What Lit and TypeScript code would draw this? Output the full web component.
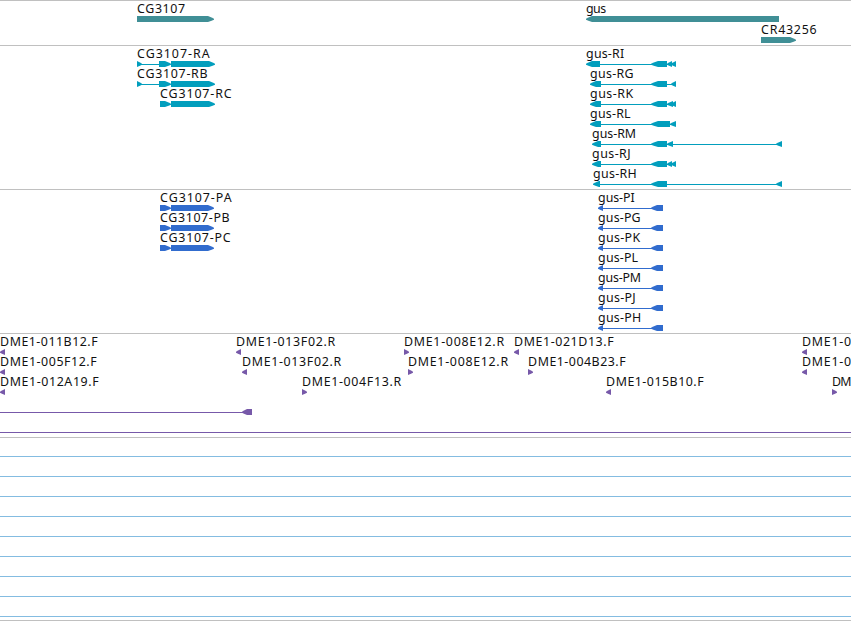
import { LitElement, html, svg, css } from 'lit';
import { customElement, property } from 'lit/decorators.js';

type Dir = 'left' | 'right';

// [start, end, length of the arrow tip]
type Exon = [number, number, number];

interface Feature {
  name?: string;
  x?: number;
  width?: number;
  dir: Dir;
  exons: Exon[];
  line?: [number, number];
}

interface Track {
  id: string;
  color: string;
  laneHeight: number;
  pad: number;
  lanes: Feature[][];
}

const feature = (name: string, x: number, width: number, dir: Dir, exons: Exon[], line?: [number, number]): Feature =>
  ({ name, x, width, dir, exons, line });

const read = (name: string, start: number, width: number, dir: Dir) =>
  feature(name, start + 0.5, width, dir, [[start, start + 5, 5]]);

const protein = (name: string, width: number) =>
  feature(name, 598.5, width, 'left', [[598, 603, 5], [651, 663, 6]], [602, 652]);

const TRACKS: Track[] = [
  {
    id: 'genes',
    color: '#408f96',
    laneHeight: 21,
    pad: 2,
    lanes: [
      [
        feature('CG3107', 137.5, 48, 'right', [[137, 214, 6]]),
        feature('gus', 586.5, 20, 'left', [[586, 779, 6]]),
      ],
      [feature('CR43256', 761.5, 55.5, 'right', [[761, 796, 6]])],
    ],
  },
  {
    id: 'transcripts',
    color: '#029ebd',
    laneHeight: 20,
    pad: 3,
    lanes: [
      [
        feature('CG3107-RA', 137.5, 72.5, 'right', [[137, 142, 5], [159, 171, 6], [171, 215, 6]], [141, 160]),
        feature('gus-RI', 586.5, 38, 'left', [[586, 600, 6], [651, 667, 7], [667, 672, 5], [671, 676, 5]], [599, 676]),
      ],
      [
        feature('CG3107-RB', 137.5, 70.5, 'right', [[137, 142, 5], [159, 171, 6], [171, 215, 6]], [141, 160]),
        feature('gus-RG', 590.5, 43.5, 'left', [[590, 601, 6], [651, 667, 7], [671, 676, 5]], [600, 676]),
      ],
      [
        feature('CG3107-RC', 160.5, 71.5, 'right', [[160, 171, 6], [171, 215, 6]]),
        feature('gus-RK', 590.5, 43, 'left', [[590, 601, 6], [651, 667, 7], [667, 673, 6], [671, 676, 5]], [600, 676]),
      ],
      [feature('gus-RL', 590.5, 40.5, 'left', [[590, 601, 6], [651, 670, 7], [670, 676, 6]], [600, 676])],
      [feature('gus-RM', 592.5, 44, 'left', [[592, 601, 6], [651, 667, 7], [667, 673, 6], [776, 782, 6]], [600, 782])],
      [feature('gus-RJ', 592.5, 38.5, 'left', [[592, 601, 6], [651, 667, 7], [667, 672, 5], [671, 676, 5]], [600, 676])],
      [feature('gus-RH', 593.5, 43.5, 'left', [[593, 600, 6], [651, 667, 7], [776, 782, 6]], [599, 782])],
    ],
  },
  {
    id: 'proteins',
    color: '#316cce',
    laneHeight: 20,
    pad: 3,
    lanes: [
      [feature('CG3107-PA', 160.5, 71.5, 'right', [[160, 171, 6], [171, 214, 6]]), protein('gus-PI', 36.5)],
      [feature('CG3107-PB', 160.5, 69.5, 'right', [[160, 171, 6], [171, 214, 6]]), protein('gus-PG', 42.5)],
      [feature('CG3107-PC', 160.5, 70.5, 'right', [[160, 171, 6], [171, 214, 6]]), protein('gus-PK', 42)],
      [protein('gus-PL', 40)],
      [protein('gus-PM', 43)],
      [protein('gus-PJ', 37.5)],
      [protein('gus-PH', 43)],
    ],
  },
  {
    id: 'reads',
    color: '#7759a9',
    laneHeight: 20,
    pad: 3,
    lanes: [
      [
        read('DME1-011B12.F', 0, 97.5, 'left'),
        read('DME1-013F02.R', 236, 99, 'left'),
        read('DME1-008E12.R', 404, 100, 'right'),
        read('DME1-021D13.F', 514, 99.5, 'left'),
        read('DME1-0', 802, 49, 'left'),
      ],
      [
        read('DME1-005F12.F', 0, 96.5, 'left'),
        read('DME1-013F02.R', 242, 99, 'left'),
        read('DME1-008E12.R', 408, 100, 'right'),
        read('DME1-004B23.F', 528, 97.5, 'right'),
        read('DME1-0', 802, 49, 'left'),
      ],
      [
        read('DME1-012A19.F', 0, 98.5, 'left'),
        read('DME1-004F13.R', 302, 99, 'right'),
        read('DME1-015B10.F', 606, 97.5, 'left'),
        read('DM', 832, 19.5, 'right'),
      ],
      [{ dir: 'left', exons: [[242, 252, 5]], line: [0, 243] }],
      [{ dir: 'left', exons: [], line: [0, 851] }],
    ],
  },
  {
    id: 'clones',
    color: '#84bce1',
    laneHeight: 20,
    pad: 2,
    lanes: Array.from({ length: 9 }, () => [{ dir: 'right' as Dir, exons: [], line: [0, 851] as [number, number] }]),
  },
];

@customElement('genome-track')
class GenomeTrack extends LitElement {
  static styles = css`
    :host {
      display: block;
      border-top: 1px solid #c0c0c0;
    }

    .lanes {
      display: flex;
      flex-direction: column;
    }

    .lane {
      display: block;
      width: 851px;
      overflow: visible;
    }

    .label {
      font-family: 'Noto Sans', 'Open Sans', sans-serif;
      font-size: 12.4px;
      fill: #111;
    }
  `;

  @property({ attribute: false }) track!: Track;

  arrow([start, end, tip]: Exon, dir: Dir) {
    // the tip bulges a little before it closes
    const [tail, head, step] = dir === 'right' ? [start, end, -1] : [end, start, 1];
    const neck = head + step * tip;
    const bend = head + step * tip * 0.4;
    const points = [
      [tail, 15], [neck, 15], [bend, 16.4], [head, 17.7],
      [head, 18.7], [bend, 19.8], [neck, 21], [tail, 21],
    ].map((p) => p.join(',')).join(' ');
    return svg`<polygon points=${points} fill=${this.track.color}></polygon>`;
  }

  feature(f: Feature) {
    return svg`
      ${f.line
        ? svg`<rect x=${f.line[0]} y="18" width=${f.line[1] - f.line[0]} height="1" fill=${this.track.color}></rect>`
        : ''}
      ${f.exons.map((exon) => this.arrow(exon, f.dir))}
      ${f.name
        ? svg`<text class="label" x=${f.x! - 0.4} y="12" textLength=${f.width!}>${f.name}</text>`
        : ''}
    `;
  }

  render() {
    const { lanes, laneHeight, pad } = this.track;
    return html`
      <div class="lanes" style="padding-bottom: ${pad}px">
        ${lanes.map((lane) => html`
          <svg class="lane" height=${laneHeight} viewBox="0 0 851 ${laneHeight}">
            ${lane.map((f) => this.feature(f))}
          </svg>
        `)}
      </div>
    `;
  }
}

@customElement('app-root')
class AppRoot extends LitElement {
  static styles = css`
    :host {
      display: block;
      width: 851px;
      background: #fff;
      overflow: hidden;
    }

    .browser {
      display: flex;
      flex-direction: column;
      border-bottom: 1px solid #c0c0c0;
    }
  `;

  render() {
    return html`
      <div class="browser">
        ${TRACKS.map((track) => html`<genome-track .track=${track}></genome-track>`)}
      </div>
    `;
  }
}
